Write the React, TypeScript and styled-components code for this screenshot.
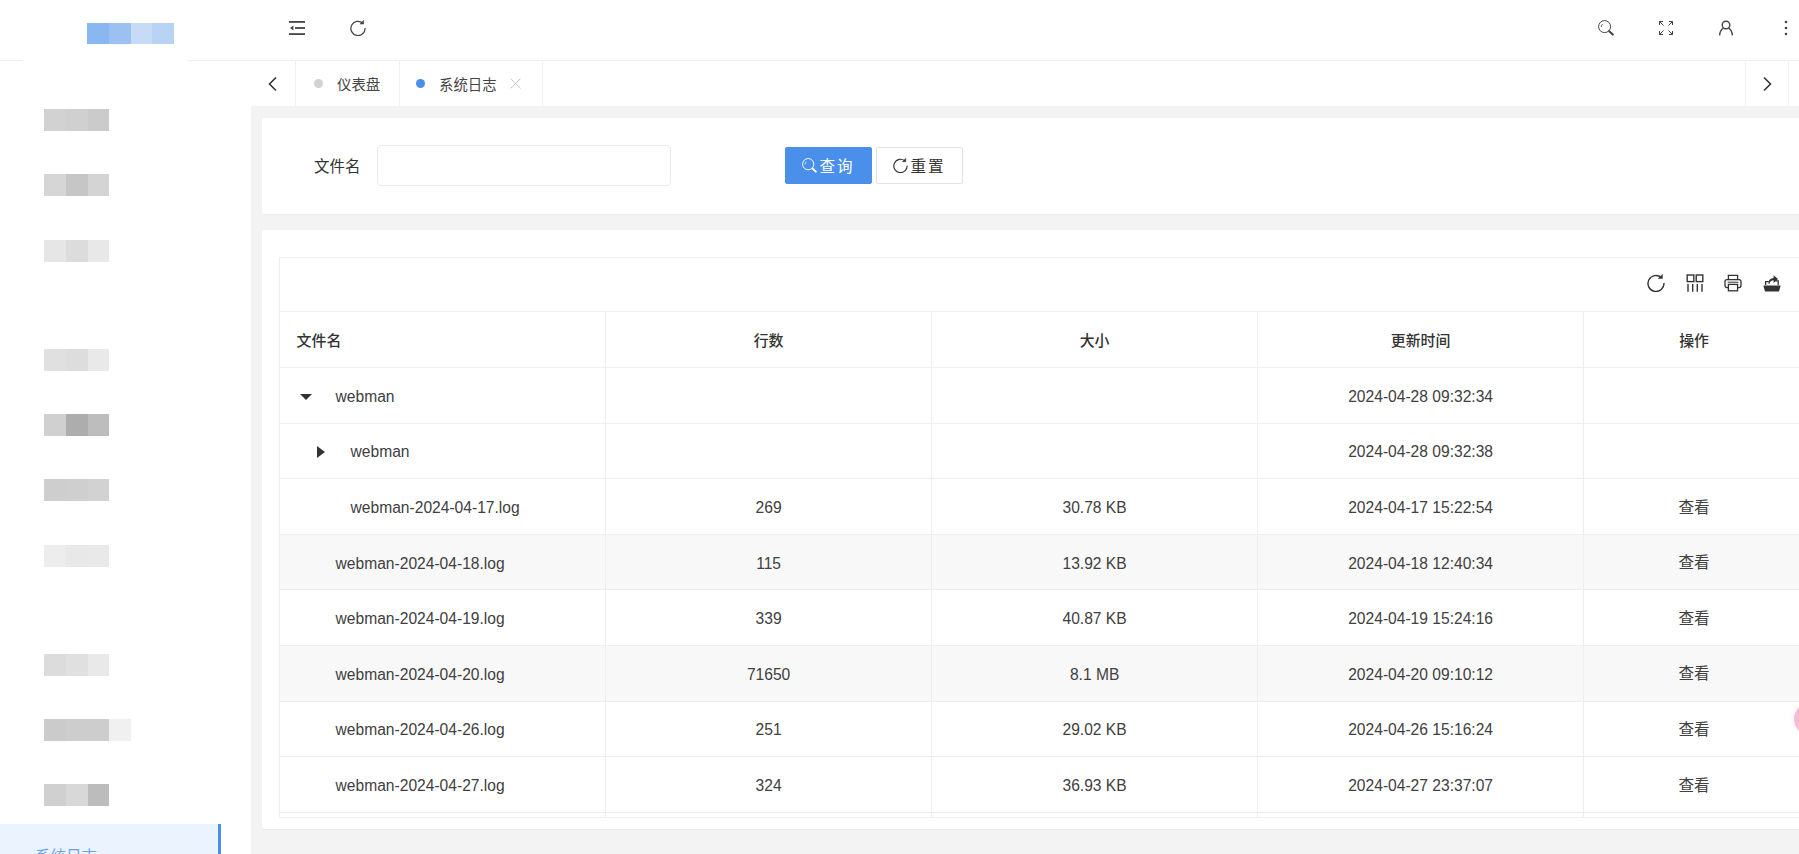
import React from "react"
import styled, { createGlobalStyle } from "styled-components"

const GlobalStyle = createGlobalStyle`
  html, body {
    margin: 0;
    height: 100%;
    overflow: hidden;
    background: #f3f3f3;
  }
  body {
    font-family: "Liberation Sans", "Noto Sans CJK SC", sans-serif;
    color: #333;
  }
`

const Shell = styled.div`
  display: flex;
  width: 1799px;
  height: 854px;
  overflow: hidden;
`

// sidebar
const Sidebar = styled.aside`
  flex: 0 0 251px;
  height: 854px;
  background: #fff;
  overflow: hidden;
  z-index: 2;
`
const Brand = styled.div`
  height: 61px;
  box-sizing: border-box;
  padding: 23px 0 0 87px;
  background: linear-gradient(90deg, #f0f0f0 23px, #fff 23px, #fff 188px, #f0f0f0 188px) bottom / 100% 1px no-repeat;
`
const Pixels = styled.div<{ $height: number }>`
  display: flex;
  height: ${p => p.$height}px;
`
const Pixel = styled.span<{ $color: string }>`
  width: 21.75px;
  background: ${p => p.$color};
`
const Menu = styled.nav`
  padding-top: 26.3px;
`
const MenuGroup = styled.div`
  & + & {
    margin-top: 43.7px;
  }
`
const MenuItem = styled.div`
  display: flex;
  align-items: center;
  height: 65.35px;
  padding-left: 44px;
`
const ActiveItem = styled.div`
  box-sizing: border-box;
  width: 221px;
  height: 60px;
  margin-top: -4.4px;
  padding: 22px 0 0 35px;
  background: #ebf3fe;
  border-right: 3px solid #4a8fe9;
  color: #6ba3ec;
  font-size: 15.5px;
  line-height: 22px;
`

// right side
const Main = styled.main`
  flex: 1;
  min-width: 0;
  overflow: hidden;
`
const TopBar = styled.header`
  display: flex;
  align-items: center;
  height: 61px;
  box-sizing: border-box;
  padding: 0 0 5px 38px;
  background: #fff;
  border-bottom: 1px solid #f0f0f0;
`
const TopLeft = styled.div`
  display: flex;
  align-items: center;
  gap: 45px;
`
const TopRight = styled.div`
  display: flex;
  align-items: center;
  gap: 44px;
  margin-left: auto;
  padding-right: 5px;
`
const IconSlot = styled.span`
  display: flex;
  width: 16px;
  height: 16px;
  color: #444;
  & svg {
    width: 100%;
    height: 100%;
  }
`
const ButtonIcon = styled(IconSlot)`
  width: 15px;
  height: 15px;
  color: inherit;
`
const TabBar = styled.div`
  display: flex;
  height: 45px;
  padding-right: 10px;
  background: #fff;
`
const TabArrow = styled.div<{ $right?: boolean }>`
  display: flex;
  align-items: center;
  justify-content: center;
  flex: 0 0 ${p => (p.$right ? "44px" : "45px")};
  box-sizing: border-box;
  color: #333;
  border-right: 1px solid #f0f0f0;
  border-left: ${p => (p.$right ? "1px solid #f0f0f0" : "none")};
  margin-left: ${p => (p.$right ? "auto" : 0)};
`
const Tab = styled.div<{ $width: number; $pad: number }>`
  display: flex;
  align-items: center;
  box-sizing: border-box;
  width: ${p => p.$width}px;
  padding-left: ${p => p.$pad}px;
  font-size: 14.4px;
  color: #444;
  border-right: 1px solid #f0f0f0;
`
const TabDot = styled.i<{ $active?: boolean }>`
  width: 9px;
  height: 9px;
  margin-right: 14px;
  border-radius: 50%;
  background: ${p => (p.$active ? "#4a8fe9" : "#d2d2d2")};
`
const TabClose = styled.span`
  display: flex;
  margin-left: 13px;
  color: #c8c8c8;
`
const Content = styled.div`
  padding: 12px 0 0 11px;
  width: 1900px;
`
const Card = styled.section`
  background: #fff;
  border-radius: 2px;
  box-shadow: 0 1px 2px rgba(0, 0, 0, 0.04);
`
const SearchCard = styled(Card)`
  display: flex;
  align-items: center;
  height: 96px;
  box-sizing: border-box;
  margin-bottom: 16px;
  padding: 0 0 2px 52px;
`
const FieldLabel = styled.label`
  width: 63px;
  font-size: 15.5px;
  color: #333;
`
const SearchInput = styled.input`
  box-sizing: border-box;
  width: 294px;
  height: 41px;
  margin-right: 114px;
  border: 1px solid #ececf0;
  border-radius: 4px;
  outline: none;
  background: #fff;
`
const Button = styled.button<{ $primary?: boolean }>`
  display: flex;
  align-items: center;
  justify-content: center;
  gap: 2px;
  box-sizing: border-box;
  width: 87px;
  height: 37px;
  margin-right: 4px;
  padding: 0;
  border: 1px solid ${p => (p.$primary ? "#4a8fe9" : "#e0e0e6")};
  border-radius: 2px;
  background: ${p => (p.$primary ? "#4a8fe9" : "#fff")};
  color: ${p => (p.$primary ? "#fff" : "#333")};
  font-family: inherit;
  font-size: 15.5px;
  letter-spacing: 2px;
`
const TableCard = styled(Card)`
  height: 599px;
  box-sizing: border-box;
  padding: 27px 0 0 16.6px;
`
const TableFrame = styled.div`
  height: 561px;
  width: 1525px;
  box-sizing: border-box;
  overflow: hidden;
  border: 1px solid #eee;
`
const TableTools = styled.div`
  display: flex;
  align-items: center;
  justify-content: flex-end;
  gap: 20.5px;
  height: 54px;
  box-sizing: border-box;
  padding: 0 22px 4px 0;
  border-bottom: 1px solid #eee;
`
const ToolIcon = styled.span`
  display: flex;
  width: 18px;
  height: 18px;
  color: #333;
  & svg {
    width: 100%;
    height: 100%;
  }
`
const Table = styled.table`
  table-layout: fixed;
  width: 1525px;
  border-collapse: collapse;
`
const HeadCell = styled.th<{ $left?: boolean }>`
  height: 55.6px;
  padding: 0 0 0 ${p => (p.$left ? "17px" : 0)};
  box-sizing: border-box;
  text-align: ${p => (p.$left ? "left" : "center")};
  font-size: 14.9px;
  font-weight: 500;
  color: #333;
  border-right: 1px solid #eee;
  border-bottom: 1px solid #eee;
`
const Row = styled.tr<{ $striped?: boolean }>`
  background: ${p => (p.$striped ? "#f8f8f8" : "#fff")};
`
const Cell = styled.td`
  height: 55.6px;
  padding: 3px 0 0;
  box-sizing: border-box;
  text-align: center;
  font-size: 15.6px;
  color: #404040;
  border-right: 1px solid #eee;
  border-bottom: 1px solid #eee;
`
const NameCell = styled(Cell)<{ $indent: number }>`
  padding-left: ${p => p.$indent}px;
  text-align: left;
`
const ActionCell = styled(Cell)`
  padding: 0 0 2px;
`
const NameLine = styled.span`
  display: flex;
  align-items: center;
`
const Caret = styled.span<{ $down?: boolean }>`
  flex: none;
  width: 0;
  height: 0;
  margin-right: ${p => (p.$down ? "24px" : "26px")};
  margin-left: ${p => (p.$down ? "-36px" : "-34px")};
  border-style: solid;
  border-color: transparent;
  ${p =>
    p.$down
      ? "border-width: 6px 6px 0 6px; border-top-color: #333;"
      : "border-width: 6px 0 6px 8px; border-left-color: #333;"}
`
const FloatBall = styled.div`
  position: fixed;
  left: 1794px;
  top: 703px;
  width: 32px;
  height: 32px;
  border-radius: 50%;
  background: #f7bcd8;
  box-shadow: 0 0 6px rgba(0, 0, 0, 0.08);
`

const SearchIcon = () => (
  <svg viewBox="0 0 16 16" fill="none" stroke="currentColor" strokeWidth="1">
    <circle cx="6.6" cy="6.6" r="6" />
    <path d="M3.2 7a3.4 3.4 0 0 1 1.5-3" strokeWidth=".8" />
    <path d="M11.2 11.2l3.6 3.4" strokeWidth="2" strokeLinecap="round" />
  </svg>
)
const ReloadIcon = () => (
  <svg viewBox="0 0 18 18" fill="none" stroke="currentColor" strokeWidth="1.4">
    <path d="M14.2 3.4A8 8 0 1 0 17 9" />
    <path d="M15.4 .4v4.2h-4.2z" fill="currentColor" strokeWidth=".5" />
  </svg>
)
const CollapseIcon = () => (
  <svg viewBox="0 0 16 16" fill="currentColor">
    <rect x="0" y="1" width="16" height="1.8" />
    <rect x="6" y="7.1" width="10" height="1.8" />
    <rect x="0" y="13.2" width="16" height="1.8" />
    <path d="M1 8l3.4-2.4v4.8z" />
  </svg>
)
const ExpandIcon = () => (
  <svg viewBox="0 0 16 16" fill="none" stroke="currentColor" strokeWidth="1">
    <path d="M1.5 5V1.5H5M1.5 1.5l4 4M14.5 5V1.5H11M14.5 1.5l-4 4M1.5 11v3.5H5M1.5 14.5l4-4M14.5 11v3.5H11M14.5 14.5l-4-4" />
  </svg>
)
const UserIcon = () => (
  <svg viewBox="0 0 16 16" fill="none" stroke="currentColor" strokeWidth="1.4">
    <circle cx="8" cy="5" r="3.8" />
    <path d="M1.6 15.4c.3-3.6 2-6.2 3.9-7.2M14.4 15.4c-.3-3.6-2-6.2-3.9-7.2" />
  </svg>
)
const DotsIcon = () => (
  <svg viewBox="0 0 16 16" fill="currentColor">
    <circle cx="8" cy="2" r="1.3" />
    <circle cx="8" cy="8" r="1.3" />
    <circle cx="8" cy="14" r="1.3" />
  </svg>
)
const ColumnsIcon = () => (
  <svg viewBox="0 0 18 18" fill="none" stroke="currentColor" strokeWidth="1.4">
    <rect x="1.2" y="1" width="6.6" height="6.6" />
    <rect x="10.2" y="1" width="6.6" height="6.6" />
    <path d="M2 10v7.8M6.7 10v7.8M11.3 10v7.8M16 10v7.8" />
  </svg>
)
const PrintIcon = () => (
  <svg viewBox="0 0 18 18" fill="none" stroke="currentColor" strokeWidth="1.3">
    <path d="M4.4 6V1.4h9.2V6" />
    <rect x="1" y="5.6" width="16" height="8" rx="2" />
    <rect x="4.4" y="10.4" width="9.2" height="6.4" fill="#fff" />
    <path d="M3.6 8.2h10.8" strokeWidth="1" />
  </svg>
)
const ExportIcon = () => (
  <svg viewBox="0 0 18 18" fill="currentColor">
    <path d="M.6 11.4h16.8v1L16 17.6H2L.6 12.4z" />
    <path d="M2.6 11V7.6h3.2M12.4 6.8h2.8V11" fill="none" stroke="currentColor" strokeWidth="1.3" />
    <path d="M5.4 9.8c0-3.6 2.2-5.6 5.2-5.7V1.2l4.4 3.9-4.4 3.9V6.2c-2 0-3.6 1.2-4.2 3.6z" />
  </svg>
)
const ChevronIcon = ({ right }: { right?: boolean }) => (
  <svg width="12" height="16" viewBox="0 0 12 16" fill="none" stroke="currentColor" strokeWidth="1.6">
    <path d={right ? "M3 1.5L9.5 8 3 14.5" : "M9 1.5L2.5 8 9 14.5"} />
  </svg>
)
const CloseIcon = () => (
  <svg width="11" height="11" viewBox="0 0 11 11" stroke="currentColor" strokeWidth="1">
    <path d="M.5.5l10 10M10.5.5l-10 10" />
  </svg>
)

const menuGroups = [
  [
    ["#d2d2d2", "#d0d0d0", "#cbcbcb"],
    ["#d6d6d6", "#c6c6c6", "#d4d4d4"],
    ["#e6e6e6", "#dcdcdc", "#e8e8e8"],
  ],
  [
    ["#e0e0e0", "#dddddd", "#e9e9e9"],
    ["#d0d0d0", "#adadad", "#bdbdbd"],
    ["#cecece", "#cfcfcf", "#d2d2d2"],
    ["#ededed", "#e8e8e8", "#e9e9e9"],
  ],
]
const lastGroup = [
  ["#dcdcdc", "#e0e0e0", "#e9e9e9"],
  ["#cbcbcb", "#cdcdcd", "#cdcdcd", "#f0f0f0"],
  ["#d0d0d0", "#d8d8d8", "#bcbcbc"],
]

const rows = [
  { name: "webman", indent: 56, caret: "down", lines: "", size: "", time: "2024-04-28 09:32:34", action: false },
  { name: "webman", indent: 71, caret: "right", lines: "", size: "", time: "2024-04-28 09:32:38", action: false },
  { name: "webman-2024-04-17.log", indent: 71, lines: "269", size: "30.78 KB", time: "2024-04-17 15:22:54", action: true },
  { name: "webman-2024-04-18.log", indent: 56, lines: "115", size: "13.92 KB", time: "2024-04-18 12:40:34", action: true, striped: true },
  { name: "webman-2024-04-19.log", indent: 56, lines: "339", size: "40.87 KB", time: "2024-04-19 15:24:16", action: true },
  { name: "webman-2024-04-20.log", indent: 56, lines: "71650", size: "8.1 MB", time: "2024-04-20 09:10:12", action: true, striped: true },
  { name: "webman-2024-04-26.log", indent: 56, lines: "251", size: "29.02 KB", time: "2024-04-26 15:16:24", action: true },
  { name: "webman-2024-04-27.log", indent: 56, lines: "324", size: "36.93 KB", time: "2024-04-27 23:37:07", action: true },
  { name: "", indent: 56, lines: "", size: "", time: "", action: false },
]

function App() {
  return (
    <>
      <GlobalStyle />
      <Shell>
        <Sidebar>
          <Brand>
            <Pixels $height={21}>
              {["#8ab6f2", "#9cc0f2", "#c8dbf6", "#b9d3f5"].map(c => (
                <Pixel key={c} $color={c} />
              ))}
            </Pixels>
          </Brand>
          <Menu>
            {menuGroups.map((group, g) => (
              <MenuGroup key={g}>
                {group.map((colors, i) => (
                  <MenuItem key={i}>
                    <Pixels $height={22}>
                      {colors.map((c, k) => (
                        <Pixel key={k} $color={c} />
                      ))}
                    </Pixels>
                  </MenuItem>
                ))}
              </MenuGroup>
            ))}
            <MenuGroup>
              {lastGroup.map((colors, i) => (
                <MenuItem key={i}>
                  <Pixels $height={22}>
                    {colors.map((c, k) => (
                      <Pixel key={k} $color={c} />
                    ))}
                  </Pixels>
                </MenuItem>
              ))}
              <ActiveItem>系统日志</ActiveItem>
            </MenuGroup>
          </Menu>
        </Sidebar>
        <Main>
          <TopBar>
            <TopLeft>
              <IconSlot><CollapseIcon /></IconSlot>
              <IconSlot><ReloadIcon /></IconSlot>
            </TopLeft>
            <TopRight>
              <IconSlot><SearchIcon /></IconSlot>
              <IconSlot><ExpandIcon /></IconSlot>
              <IconSlot><UserIcon /></IconSlot>
              <IconSlot><DotsIcon /></IconSlot>
            </TopRight>
          </TopBar>
          <TabBar>
            <TabArrow><ChevronIcon /></TabArrow>
            <Tab $width={104} $pad={18}>
              <TabDot />
              仪表盘
            </Tab>
            <Tab $width={143} $pad={16}>
              <TabDot $active />
              系统日志
              <TabClose><CloseIcon /></TabClose>
            </Tab>
            <TabArrow $right><ChevronIcon right /></TabArrow>
          </TabBar>
          <Content>
            <SearchCard>
              <FieldLabel>文件名</FieldLabel>
              <SearchInput />
              <Button $primary>
                <ButtonIcon><SearchIcon /></ButtonIcon>
                查询
              </Button>
              <Button>
                <ButtonIcon><ReloadIcon /></ButtonIcon>
                重置
              </Button>
            </SearchCard>
            <TableCard>
              <TableFrame>
                <TableTools>
                  <ToolIcon><ReloadIcon /></ToolIcon>
                  <ToolIcon><ColumnsIcon /></ToolIcon>
                  <ToolIcon><PrintIcon /></ToolIcon>
                  <ToolIcon><ExportIcon /></ToolIcon>
                </TableTools>
                <Table>
                  <colgroup>
                    <col width="326" />
                    <col width="326" />
                    <col width="326" />
                    <col width="326" />
                    <col width="221" />
                  </colgroup>
                  <thead>
                    <tr>
                      <HeadCell $left>文件名</HeadCell>
                      <HeadCell>行数</HeadCell>
                      <HeadCell>大小</HeadCell>
                      <HeadCell>更新时间</HeadCell>
                      <HeadCell>操作</HeadCell>
                    </tr>
                  </thead>
                  <tbody>
                    {rows.map((row, i) => (
                      <Row key={i} $striped={row.striped}>
                        <NameCell $indent={row.indent}>
                          <NameLine>
                            {row.caret && <Caret $down={row.caret === "down"} />}
                            {row.name}
                          </NameLine>
                        </NameCell>
                        <Cell>{row.lines}</Cell>
                        <Cell>{row.size}</Cell>
                        <Cell>{row.time}</Cell>
                        <ActionCell>{row.action ? "查看" : ""}</ActionCell>
                      </Row>
                    ))}
                  </tbody>
                </Table>
              </TableFrame>
            </TableCard>
          </Content>
        </Main>
      </Shell>
      <FloatBall />
    </>
  )
}

export default App
